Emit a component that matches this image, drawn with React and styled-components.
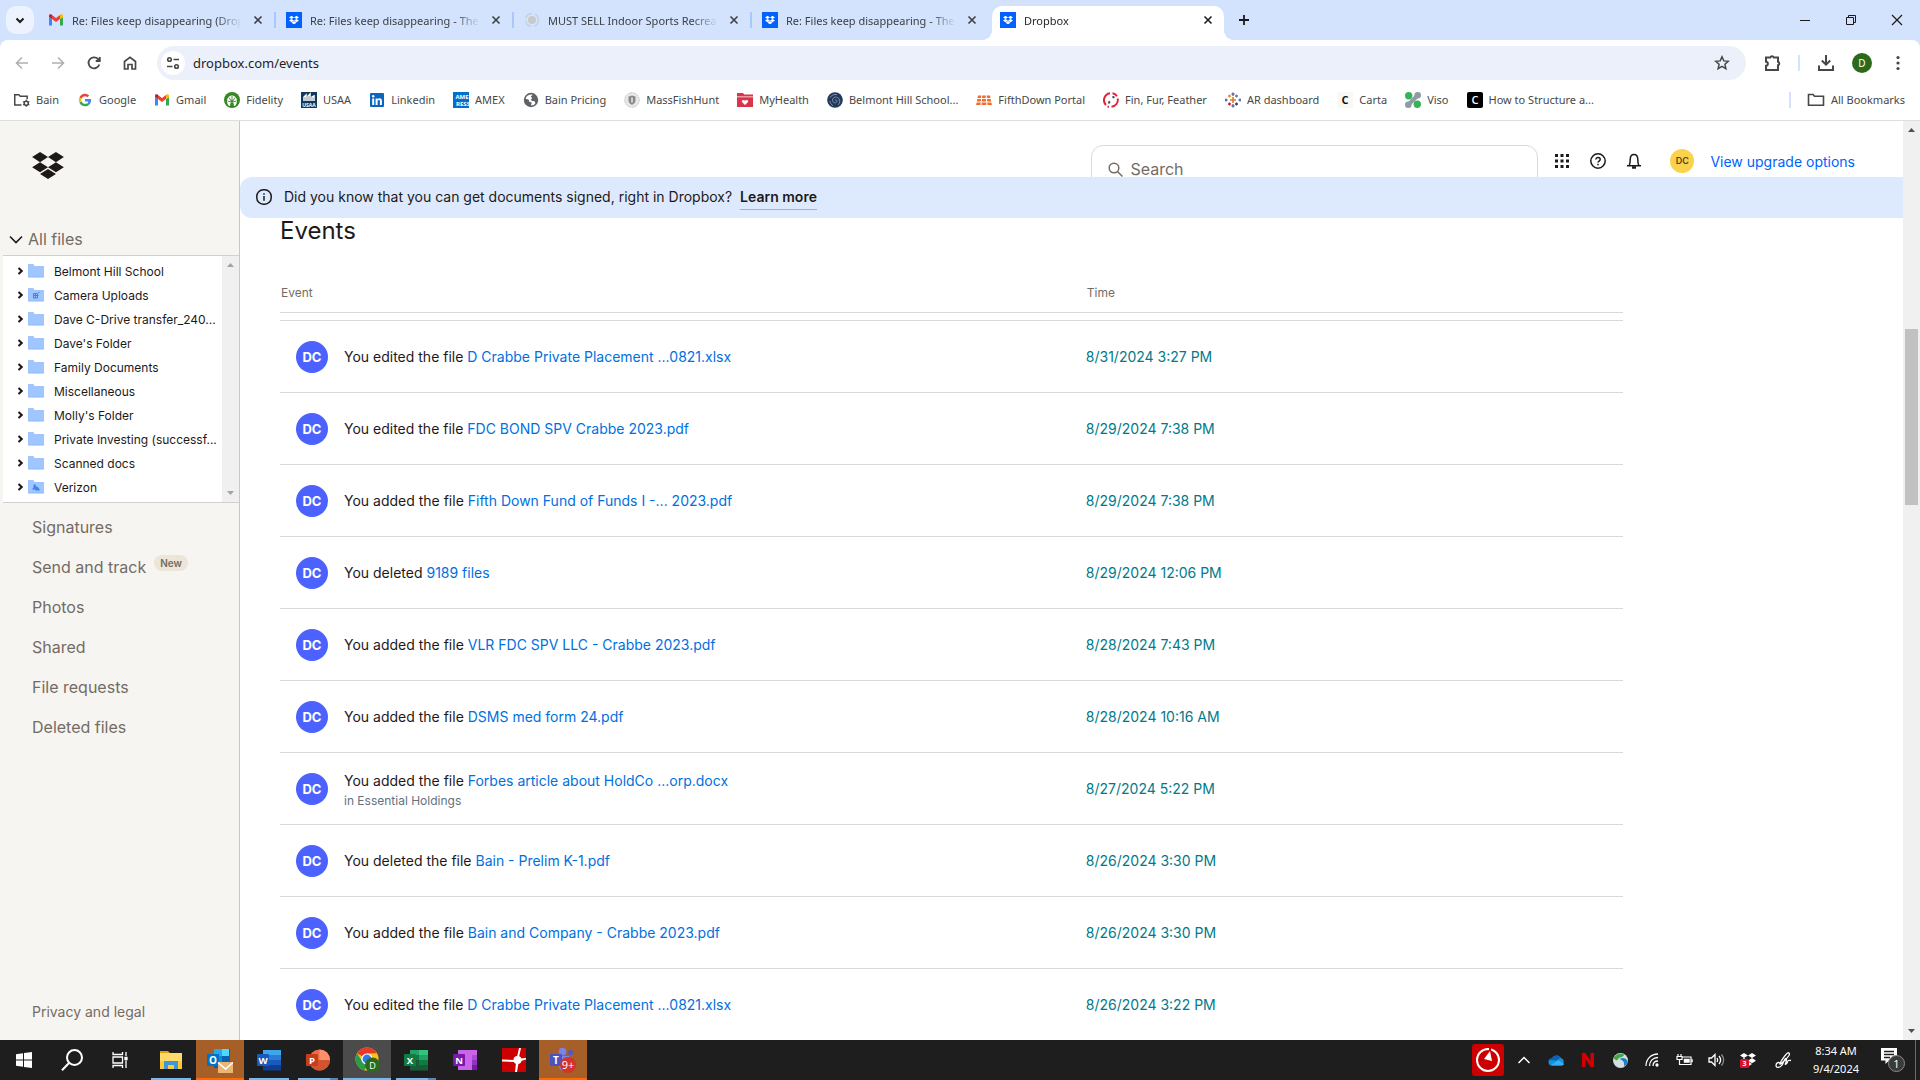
import React from "react";
import styled, { createGlobalStyle, css } from "styled-components";

/* ---------- theme ---------- */
const ui = '"Noto Sans", "Open Sans", sans-serif';
const body = 'Inter, "Liberation Sans", sans-serif';
const c = {
  ink: "#1e1919",
  muted: "#736c64",
  line: "#d9d9d9",
  sand: "#f7f5f2",
  link: "#0070e0",
  teal: "#007a8a",
  blue: "#0061fe",
  strip: "#d3e3fd",
  chrome: "#474747",
};

const Global = createGlobalStyle`
  *, *::before, *::after { box-sizing: border-box; }
  html, body { margin: 0; }
  body { font-family: ${body}; color: ${c.ink}; background: #fff; overflow: hidden; }
  button { font: inherit; color: inherit; background: none; border: 0; padding: 0; cursor: pointer; }
  a { color: inherit; text-decoration: none; }
  svg { display: block; flex: none; }
`;

/* ---------- shell ---------- */
const Screen = styled.div`
  display: flex;
  flex-direction: column;
  height: 100vh;
`;
const Center = css`
  display: flex;
  align-items: center;
  justify-content: center;
`;

/* ---------- browser tab strip ---------- */
const Strip = styled.header`
  display: flex;
  height: 40px;
  padding-left: 6px;
  background: ${c.strip};
  font-family: ${ui};
  font-size: 11px;
`;
const TabSearch = styled.button`
  ${Center}
  flex: none;
  width: 28px;
  height: 28px;
  margin: 6px 4px 0 0;
  border-radius: 10px;
  background: #ecf3fe;
`;
const Tabs = styled.nav`
  display: flex;
  align-items: flex-end;
  flex: 0 1 1190px;
  min-width: 0;
`;
const Tab = styled.div`
  display: flex;
  align-items: center;
  gap: 8px;
  flex: 0 1 238px;
  min-width: 0;
  height: 34px;
  padding: 0 0 6px 10px;
  color: #3c4043;
  ${(p) =>
    p.$active &&
    css`
      position: relative;
      flex-basis: 232px;
      margin: 0 4px 0 2px;
      padding: 0 8px 6px 8px;
      border-radius: 10px 10px 0 0;
      background: #fff;
      color: #1f1f1f;
      &::before,
      &::after {
        content: "";
        position: absolute;
        bottom: 0;
        width: 10px;
        height: 10px;
      }
      &::before {
        right: 100%;
        background: radial-gradient(circle at 0 0, transparent 10px, #fff 10px);
      }
      &::after {
        left: 100%;
        background: radial-gradient(circle at 100% 0, transparent 10px, #fff 10px);
      }
    `}
`;
const TabTitle = styled.span`
  flex: 1;
  min-width: 0;
  overflow: hidden;
  white-space: nowrap;
  padding-top: 2px;
  line-height: 16px;
  mask-image: linear-gradient(to right, #000 85%, transparent 100%);
`;
const TabClose = styled.button`
  ${Center}
  width: 16px;
  height: 16px;
`;
const TabRule = styled.span`
  width: 2px;
  height: 16px;
  background: ${(p) => (p.$hidden ? "transparent" : "#a8c7fa")};
`;
const NewTab = styled.button`
  ${Center}
  flex: none;
  width: 28px;
  height: 28px;
  margin: 6px 0 0 2px;
`;
const WindowControls = styled.div`
  display: flex;
  margin-left: auto;
`;
const WindowButton = styled.button`
  ${Center}
  width: 46px;
  height: 40px;
`;

/* ---------- toolbar ---------- */
const ToolbarBack = styled.div`
  background: ${c.strip};
`;
const Toolbar = styled.div`
  display: flex;
  align-items: center;
  height: 46px;
  padding: 0 4px;
  border-radius: 8px 8px 0 0;
  background: #fff;
  color: ${c.chrome};
`;
const ToolButton = styled.button`
  ${Center}
  width: 36px;
  height: 34px;
  color: ${(p) => (p.$dim ? "#b0b0b0" : "inherit")};
`;
const Omnibox = styled.div`
  display: flex;
  align-items: center;
  flex: 1;
  height: 34px;
  margin: 0 8px 0 9px;
  padding: 0 16px 0 4px;
  border-radius: 17px;
  background: #ecf0fa;
`;
const SiteInfo = styled.button`
  ${Center}
  width: 24px;
  height: 24px;
  border-radius: 50%;
  background: #fff;
`;
const Address = styled.input`
  flex: 1;
  min-width: 0;
  margin-left: 8px;
  padding: 0;
  border: 0;
  outline: 0;
  background: none;
  font: 13px/20px ${ui};
  color: #1f1f1f;
`;
const Divider = styled.span`
  width: 2px;
  height: 16px;
  margin: 0 ${(p) => p.$gap}px;
  background: ${c.strip};
`;
const Profile = styled.span`
  ${Center}
  width: 20px;
  height: 20px;
  border-radius: 50%;
  background: #2b6a1b;
  color: #fff;
  font: 10px/20px ${ui};
`;

/* ---------- bookmarks ---------- */
const Bookmarks = styled.nav`
  display: flex;
  align-items: center;
  gap: 18px;
  height: 35px;
  padding: 0 15px 6px 14px;
  border-bottom: 1px solid #dcdfe0;
  background: #fff;
  font-family: ${ui};
  font-size: 11px;
  line-height: 16px;
  color: ${c.chrome};
  white-space: nowrap;
`;
const Bookmark = styled.a`
  display: flex;
  align-items: center;
  gap: 6px;
`;
const AllBookmarks = styled.div`
  display: flex;
  align-items: center;
  gap: 16px;
  margin-left: auto;
`;

/* ---------- page ---------- */
const Page = styled.div`
  display: flex;
  flex: 1;
  min-height: 0;
`;
const Sidebar = styled.aside`
  display: flex;
  flex-direction: column;
  width: 240px;
  flex: none;
  border-right: 1px solid #c9c8c6;
  background: ${c.sand};
  color: ${c.muted};
`;
const LogoLink = styled.a`
  padding: 31px 32px 0;
`;
const AllFiles = styled.button`
  display: flex;
  align-items: center;
  gap: 5px;
  margin: 45px 0 1px;
  padding: 0 9px;
  height: 30px;
  font-size: 16px;
  line-height: 20px;
`;
const TreeBox = styled.div`
  display: flex;
  margin: 0 0 4px 3px;
  border: solid #d0d0d0;
  border-width: 1px 0;
  background: #fff;
`;
const Tree = styled.ul`
  flex: 1;
  min-width: 0;
  margin: 0;
  padding: 3px 0;
  list-style: none;
  color: ${c.ink};
`;
const Branch = styled.li`
  display: flex;
  align-items: center;
  height: 24px;
  padding-left: 14px;
  font-size: 12px;
`;
const BranchLabel = styled.a`
  margin-left: 10px;
  white-space: nowrap;
`;
const FolderGap = styled.button`
  ${Center}
  width: 6px;
  margin-right: 5px;
`;
const Track = styled.div`
  display: flex;
  flex-direction: column;
  justify-content: space-between;
  align-items: center;
  flex: none;
  width: 17px;
  background: #f0f0f0;
`;
const TrackArrow = styled.button`
  ${Center}
  width: 17px;
  height: 18px;
`;
const PageTrack = styled(Track)`
  justify-content: flex-start;
`;
const ThumbSpace = styled.div`
  display: flex;
  justify-content: center;
  flex: 1;
  width: 100%;
  padding: 190px 0 0;
`;
const Thumb = styled.div`
  width: 13px;
  height: 176px;
  background: #c1c1c1;
`;
const SideLink = styled.a`
  display: flex;
  align-items: center;
  gap: 8px;
  height: 40px;
  padding-left: 32px;
  font-size: 16px;
  line-height: 20px;
`;
const NewBadge = styled.span`
  height: 16px;
  margin-bottom: 8px;
  padding: 0 6px;
  border-radius: 8px;
  background: #ede5d8;
  font: 600 10px/16px ${body};
`;
const Legal = styled.a`
  margin-top: auto;
  padding: 0 0 18px 32px;
  font-size: 14px;
  line-height: 20px;
`;

const Main = styled.main`
  flex: 1;
  min-width: 0;
  overflow: hidden;
  background: #fff;
`;
const TopBar = styled.div`
  display: flex;
  justify-content: flex-end;
  align-items: flex-start;
  height: 56px;
  padding: 24px 48px 0 0;
  overflow: hidden;
`;
const Search = styled.label`
  display: flex;
  align-items: center;
  gap: 7px;
  width: 447px;
  height: 48px;
  margin-right: 6px;
  padding: 0 16px;
  border: 1px solid ${c.line};
  border-radius: 12px;
`;
const SearchInput = styled.input`
  flex: 1;
  min-width: 0;
  padding: 0;
  border: 0;
  outline: 0;
  background: none;
  font: 16px/20px ${body};
  &::placeholder {
    color: ${c.muted};
    opacity: 1;
  }
`;
const TopButton = styled.button`
  ${Center}
  width: 36px;
  height: 32px;
`;
const Account = styled.button`
  ${Center}
  width: 24px;
  height: 24px;
  margin: 4px 16px 0 18px;
  border-radius: 50%;
  background: #fad24b;
  color: #55431a;
  font: 600 9px/24px ${body};
`;
const Upgrade = styled.a`
  font-size: 14px;
  line-height: 34px;
  color: ${c.blue};
`;
const Banner = styled.div`
  display: flex;
  align-items: center;
  height: 41px;
  padding: 0 0 2px 16px;
  border-radius: 12px 0 0 12px;
  background: #ddeafe;
  font-size: 14px;
`;
const BannerText = styled.span`
  margin: 0 8px 0 12px;
`;
const LearnMore = styled.a`
  margin-top: 2px;
  border-bottom: 1px solid #b0b0b4;
  font-weight: 600;
  line-height: 24px;
`;
const Content = styled.section`
  padding: 0 280px 0 40px;
`;
const Title = styled.h1`
  margin: 0;
  font: 400 24px/26px ${body};
`;
const Table = styled.table`
  width: 100%;
  table-layout: fixed;
  border-spacing: 0;
  tbody::before {
    content: "";
    display: block;
    height: 7px;
  }
`;
const Head = styled.th`
  width: ${(p) => p.$width};
  padding: 39px 0 9px 1px;
  border-bottom: 1px solid ${c.line};
  text-align: left;
  font-weight: 400;
  font-size: 12px;
  line-height: 20px;
  color: ${c.muted};
`;
const Cell = styled.td`
  height: 72px;
  padding: 0;
  border-top: 1px solid ${c.line};
  font-size: 14px;
  line-height: 20px;
`;
const EventBox = styled.div`
  display: flex;
  align-items: center;
  gap: 16px;
  padding-left: 16px;
`;
const Avatar = styled.span`
  ${Center}
  width: 32px;
  height: 32px;
  border-radius: 50%;
  background: #4c62ff;
  color: #fff;
  font: 700 13px/32px ${body};
`;
const FileLink = styled.a`
  color: ${c.link};
`;
const Details = styled.div`
  padding-top: ${(p) => (p.$stacked ? 4 : 0)}px;
`;
const Place = styled.div`
  font-size: 12px;
  line-height: 20px;
  color: #637282;
`;
const Time = styled.time`
  color: ${c.teal};
`;

/* ---------- taskbar ---------- */
const Taskbar = styled.footer`
  display: flex;
  height: 40px;
  flex: none;
  background: #1e1e1e;
  color: #fff;
  font-family: ${ui};
`;
const SystemButton = styled.button`
  ${Center}
  width: 48px;
`;
const Apps = styled.div`
  display: flex;
  gap: 1px;
  padding-left: 3px;
`;
const AppButton = styled.button`
  ${Center}
  width: 48px;
  background: ${(p) => (p.$alert ? "#a65f28" : p.$active ? "#4b4b4b" : "none")};
  background-image: ${(p) => {
    if (p.$alert) return "linear-gradient(#ff6a00, #ff6a00)";
    if (p.$stack) return "linear-gradient(to right, #76b9ed 80%, #5688b0 80%)";
    return p.$open ? "linear-gradient(#76b9ed, #76b9ed)" : "none";
  }};
  background-size: ${(p) => (p.$alert || p.$active ? "48px" : "40px")} 2px;
  background-repeat: no-repeat;
  background-position: bottom center;
`;
const Tray = styled.div`
  display: flex;
  margin-left: auto;
`;
const TrayButton = styled.button`
  ${Center}
  width: ${(p) => p.$width || 32}px;
`;
const Clock = styled.time`
  display: flex;
  flex-direction: column;
  justify-content: center;
  width: 68px;
  font-size: 11px;
  line-height: 18px;
  text-align: center;
`;
const Notices = styled.button`
  ${Center}
  width: 46px;
  border-right: 1px solid #6a6a6a;
  margin-right: 4px;
`;

/* ---------- icons ---------- */
const Svg = ({ s = 16, w = s, h = s, vb, children, ...r }) => (
  <svg width={w} height={h} viewBox={vb || `0 0 ${w} ${h}`} fill="none" aria-hidden="true" {...r}>
    {children}
  </svg>
);
const Line = ({ children, sw = 1.8, ...r }) => (
  <Svg stroke="currentColor" strokeWidth={sw} {...r}>{children}</Svg>
);
const Glyph = ({ x = 8, y = 12, size = 10, fill = "#fff", weight = 700, children }) => (
  <text x={x} y={y} fontSize={size} fill={fill} fontWeight={weight} textAnchor="middle" fontFamily="Open Sans, sans-serif">
    {children}
  </text>
);

const boxes = "M8 0l8 5.1-8 5.1-8-5.1zM24 0l8 5.1-8 5.1-8-5.1zM0 15.3l8-5.1 8 5.1-8 5.1zM24 10.2l8 5.1-8 5.1-8-5.1zM8 22.1l8-5.1 8 5.1-8 5.1z";
const DropboxMark = ({ w = 32, h = 27, fill = c.ink }) => (
  <Svg w={w} h={h} vb="0 0 32 27.2"><path fill={fill} d={boxes} /></Svg>
);
const DropboxTile = () => (
  <Svg>
    <path fill="#0061fe" d="M0 0h16v16H0z" />
    <path fill="#fff" transform="translate(3 3.8) scale(.3125)" d={boxes} />
  </Svg>
);
const Gmail = () => (
  <Svg>
    <path fill="#4285f4" d="M1 13.5h3V7L1 5z" />
    <path fill="#34a853" d="M12 13.5h3V5l-3 2z" />
    <path fill="#ea4335" d="M4 7V3l4 3 4-3v4l-4 3z" />
    <path fill="#c5221f" d="M1 5V3.6C1 2.2 2.6 1.8 3.6 2.6L4 3v4z" />
    <path fill="#fbbc04" d="M15 5V3.6C15 2.2 13.4 1.8 12.4 2.6L12 3v4z" />
  </Svg>
);
const Loading = () => (
  <Svg>
    <circle cx="8" cy="8" r="6.5" stroke="#c4d0e4" strokeWidth="1.5" strokeDasharray="8 3" />
    <circle cx="8" cy="8" r="4" fill="#c9c9c9" />
  </Svg>
);
const Close = () => <Line s={10} sw={1.6}><path d="M1.5 1.5l7 7M8.5 1.5l-7 7" /></Line>;
const Google = () => (
  <Svg>
    <path fill="#4285f4" d="M14 8.2c0-.5 0-.9-.1-1.3H8v2.5h3.4c-.2.8-.6 1.4-1.2 1.8l2 1.6c1.2-1.1 1.8-2.7 1.8-4.6z" />
    <path fill="#34a853" d="M8 14.3c1.7 0 3.1-.5 4.2-1.5l-2-1.6c-.6.4-1.3.6-2.2.6-1.6 0-3-1.1-3.5-2.6l-2.1 1.6C3.4 12.9 5.5 14.3 8 14.3z" />
    <path fill="#fbbc04" d="M4.5 9.2a3.7 3.7 0 010-2.4L2.4 5.2a6.2 6.2 0 000 5.6z" />
    <path fill="#ea4335" d="M8 4.2c.9 0 1.8.3 2.4 1l1.8-1.8A6.2 6.2 0 002.4 5.2l2.1 1.6C5 5.3 6.4 4.2 8 4.2z" />
  </Svg>
);
const BainFolder = () => (
  <Svg w={16} h={16} vb="1 0 17 16" stroke={c.chrome} strokeWidth="1.6">
    <path d="M9 13.2H1.8V2.3h4.3l1.5 1.8H15v3" />
    <circle cx="14" cy="11.5" r="2.2" />
    <path d="M14 7.7v1.5M14 13.8v1.5M10.7 9.6l1.3.8M16 12.6l1.3.8M10.7 13.4l1.3-.8M16 10.4l1.3-.8" strokeWidth="1.3" />
  </Svg>
);
const Fidelity = () => (
  <Svg>
    <circle cx="8" cy="8" r="8" fill="#368727" />
    <path fill="#fff" d="M4.5 13.5C1.5 9 3.5 3.5 8 3.5s6.5 5.5 3.5 10L10 14l-.5-3h-3L6 14z" />
    <path stroke="#368727" strokeWidth=".9" d="M8 4v5M5 5.5l2.3 3.7M11 5.500L8.700 9.200M3.700 9l3.300 1M12.300 9L9 10" />
    <circle cx="8" cy="9.6" r="1.3" fill="#368727" />
  </Svg>
);
const Usaa = () => (
  <Svg>
    <path fill="#12395b" d="M0 0h16v16H0z" />
    <path stroke="#fff" strokeWidth="1.5" d="M3 9V5l2-2v6M7 9V4l2-2v7M11 9V5l2-1v5" />
    <Glyph y={15} size={5}>USAA</Glyph>
  </Svg>
);
const Linkedin = () => (
  <Svg>
    <rect x="1" y="1" width="14" height="14" rx="1" fill="#0a66c2" />
    <path fill="#fff" d="M3.2 6.4h2V13h-2zM6.6 6.4h1.9v.9c.4-.7 1.1-1.1 2-1.1 1.8 0 2.4 1.1 2.4 3V13h-2V9.6c0-1-.2-1.7-1.1-1.7-.8 0-1.2.6-1.2 1.7V13h-2z" />
    <circle cx="4.2" cy="4.3" r="1.2" fill="#fff" />
  </Svg>
);
const Amex = () => (
  <Svg>
    <path fill="#016fd0" d="M0 0h16v16H0z" />
    <Glyph x={9} y={7} size={6}>AME</Glyph>
    <Glyph x={10} y={14} size={6}>RESS</Glyph>
  </Svg>
);
const Globe = () => (
  <Svg>
    <circle cx="8" cy="8" r="7.2" fill="#5f6368" />
    <path fill="#fff" d="M9.5 2.6C6.5 2 3.5 3.6 2.6 6.5c1.2 1 2.3.5 3.1 1.3.7.8-.2 1.6.9 2.2 1 .5 2 0 2 1.200 0 .8-.7 1.300-.5 2.300 1.800 0 3.300-.8 4.300-2.200-.6-1.200-.4-1.900-1.600-2.300-1.200-.3-2.300.3-2.700-.9-.3-1 .9-1.300 1-2 .1-.8-1.300-.5-1.200-1.500.1-.9 1.500-.7 1.600-2z" />
  </Svg>
);
const Shield = () => (
  <Svg>
    <circle cx="8" cy="8" r="7.3" fill="#e8e8e8" stroke="#bcbcbc" strokeDasharray="1.5 1" />
    <path fill="#8a8a8a" d="M4.5 4.5L8 3.5l3.5 1V9c0 2-2 3-3.5 3.8C6.5 12 4.5 11 4.5 9z" />
    <path fill="#fff" d="M7.4 5.5h1.2v5H7.4z" />
  </Svg>
);
const Health = () => (
  <Svg>
    <path fill="#d9344a" d="M0 1h6l1.2 1.5H16v2H0zM0 5.2h16V15H0z" />
    <path fill="#fff" d="M8 13L5 10c-.9-1.7 1.6-3 3-1.2 1.4-1.8 3.9-.5 3 1.2z" />
  </Svg>
);
const Belmont = () => (
  <Svg>
    <circle cx="8" cy="8" r="7.8" fill="#22395a" />
    <path stroke="#7f93b2" d="M8 8.5c.8-1.3 2.6-.2 1.9 1.2-.9 1.8-3.9 1.3-4.3-.8C5 6 8 4.3 10.5 5.5c3 1.5 2.8 5.5.5 7.5M3 5.5C4.5 3 7.5 2 10 2.7M3 9c.2 2 1.2 3.7 3 4.7" />
  </Svg>
);
const FifthDown = () => (
  <Svg>
    <path fill="#f26b2c" d="M2 3.5h3.3L5 6H1.5zM6.3 3.5h3.4V6H6zM10.7 3.5H14l.5 2.5H11zM1.3 7H5l-.2 2.5H.8zM6 7h4v2.5H5.8zM11 7h3.700l.5 2.500h-4zM.7 10.500h4L4.500 13H0zM5.700 10.500h4.600V13H5.500zM11.300 10.500h4L16 13h-4.500z" />
  </Svg>
);
const Feather = () => (
  <Svg>
    <path stroke="#e0263c" strokeWidth="2" d="M7 1.2A7 7 0 003 13M4.5 14.3c.6.3 1 .5 1.5.5M9.5 1.2c2 .3 3.5 1.5 4.5 3M14.8 6.5c.5 4-2 7.5-6.3 8.300" />
    <path fill="#3b3b4f" d="M9 4.500l2.200-.5.500 1.800-1.700.7zM5 9.500l2-.5.3 2L5.500 12z" />
  </Svg>
);
const Tableau = () => (
  <Svg strokeWidth="1.3">
    <path stroke="#e8762d" strokeWidth="1.6" d="M8 5v6M5 8h6" />
    <path stroke="#5b6591" d="M8 .5V4M6.500 2h3M8 12v3.500M6.500 14h3M1 6.500v3M0 8h2.500M15 6.500v3M13.500 8H16" />
    <path stroke="#59879b" d="M11.500 2.500v3M10 4h3" />
    <path stroke="#eb912c" d="M4.500 2.500v3M3 4h3" />
    <path stroke="#c72035" d="M4.500 10.500v3M3 12h3" />
    <path stroke="#1f447e" d="M11.500 10.500v3M10 12h3" />
  </Svg>
);
const Carta = () => <Svg><path fill="#faf8f2" d="M0 0h16v16H0z" /><Glyph fill="#111" size={11}>C</Glyph></Svg>;
const Viso = () => (
  <Svg>
    <path stroke="#8c9ba5" strokeWidth="4" strokeLinecap="round" d="M3.500 12.500l9-9" />
    <circle cx="12.700" cy="3.300" r="3.300" fill="#8c9ba5" />
    <circle cx="3.300" cy="12.700" r="3.300" fill="#8c9ba5" />
    <circle cx="3.700" cy="3.700" r="3.700" fill="#37b25a" />
    <circle cx="12.300" cy="12.300" r="3.700" fill="#37b25a" />
  </Svg>
);
const HowTo = () => <Svg><rect width="16" height="16" rx="2" fill="#000" /><Glyph weight={600} size={11}>C</Glyph></Svg>;

const FolderIcon = ({ mark }) => (
  <Svg w={16} h={14}>
    <path fill="#8ab8ff" d="M0 1.500C0 .7.500.3 1.200.3h3.600c.6 0 .9.300 1.100.8l.3.900h8.600c.8 0 1.200.4 1.200 1.200v9.300c0 .7-.4 1.100-1.200 1.100H1.200C.4 13.600 0 13.200 0 12.500z" />
    <path fill="#a0c5ff" d="M0 1.500C0 .7.500.3 1.200.3h3.600c.6 0 .9.300 1.100.8l.3.900h8.600c.8 0 1.200.4 1.200 1.200V12.600H0z" />
    {mark === "camera" && (
      <>
        <path stroke="#3d84f2" d="M5.500 5.500h4v4.500h-4zM5 7.500h5.500M7.500 5v5" />
        <path fill="#3d84f2" d="M10.500 4h1v1h-1z" />
      </>
    )}
    {mark === "team" && <path fill="#3d84f2" d="M4 9.500L5.500 7.500 5.300 5.500 7 4l1.200 2L8 7l1.200-.5L10.800 8l1.200 2.500H7.500L7 9.500z" />}
  </Svg>
);

/* ---------- data ---------- */
const tabs = [
  [Gmail, "Re: Files keep disappearing (Dropbox)"],
  [DropboxTile, "Re: Files keep disappearing - The Dropbox"],
  [Loading, "MUST SELL Indoor Sports Recreation"],
  [DropboxTile, "Re: Files keep disappearing - The Dropbox"],
  [DropboxTile, "Dropbox"],
];
const bookmarks = [
  [BainFolder, "Bain"], [Google, "Google"], [Gmail, "Gmail"], [Fidelity, "Fidelity"], [Usaa, "USAA"],
  [Linkedin, "Linkedin"], [Amex, "AMEX"], [Globe, "Bain Pricing"], [Shield, "MassFishHunt"], [Health, "MyHealth"],
  [Belmont, "Belmont Hill School..."], [FifthDown, "FifthDown Portal"], [Feather, "Fin, Fur, Feather"],
  [Tableau, "AR dashboard"], [Carta, "Carta"], [Viso, "Viso"], [HowTo, "How to Structure a..."],
];
const folders = [
  ["Belmont Hill School"], ["Camera Uploads", "camera"], ["Dave C-Drive transfer_240..."], ["Dave's Folder"],
  ["Family Documents"], ["Miscellaneous"], ["Molly's Folder"], ["Private Investing (successf..."], ["Scanned docs"],
  ["Verizon", "team"],
];
const links = ["Signatures", "Send and track", "Photos", "Shared", "File requests", "Deleted files"];
const events = [
  ["You edited the file", "D Crabbe Private Placement ...0821.xlsx", "8/31/2024 3:27 PM"],
  ["You edited the file", "FDC BOND SPV Crabbe 2023.pdf", "8/29/2024 7:38 PM"],
  ["You added the file", "Fifth Down Fund of Funds I -... 2023.pdf", "8/29/2024 7:38 PM"],
  ["You deleted", "9189 files", "8/29/2024 12:06 PM"],
  ["You added the file", "VLR FDC SPV LLC - Crabbe 2023.pdf", "8/28/2024 7:43 PM"],
  ["You added the file", "DSMS med form 24.pdf", "8/28/2024 10:16 AM"],
  ["You added the file", "Forbes article about HoldCo ...orp.docx", "8/27/2024 5:22 PM", "in Essential Holdings"],
  ["You deleted the file", "Bain - Prelim K-1.pdf", "8/26/2024 3:30 PM"],
  ["You added the file", "Bain and Company - Crabbe 2023.pdf", "8/26/2024 3:30 PM"],
  ["You edited the file", "D Crabbe Private Placement ...0821.xlsx", "8/26/2024 3:22 PM"],
];

/* ---------- taskbar icons ---------- */
const Tile = ({ fill, letter }) => (
  <>
    <rect x="0" y="6" width="12" height="12" rx="1" fill={fill} />
    <Glyph x={6} y={15.5} size={9.5}>{letter}</Glyph>
  </>
);
const Explorer = () => (
  <Svg s={24}>
    <path fill="#e5a00d" d="M1 3h8l2 2H1z" />
    <path fill="#ffd96a" d="M1 5h22v16H1z" />
    <path fill="#ffca3a" d="M1 13h22v8H1z" />
    <path fill="#3f97d8" d="M5 13h14v8h-4v-4H9v4H5z" />
  </Svg>
);
const Outlook = () => (
  <Svg w={26} h={26}>
    <path fill="#0f5fb0" d="M7 2h16v19H7z" />
    <path fill="#28a8ea" d="M7 2h8v7H7z" />
    <path fill="#50d9ff" d="M15 2h7v7h-7z" />
    <path fill="#0a8bdc" d="M7 9h8v6H7z" />
    <path fill="#0072c6" d="M0 7h12v12H0z" />
    <Glyph x={6} y={17} size={10}>O</Glyph>
    <path fill="#e9b675" d="M11 15h15v11H11z" />
    <path stroke="#fff" strokeWidth="1.4" d="M11 15.500l7.500 6.500 7.500-6.500" />
  </Svg>
);
const Word = () => (
  <Svg s={24}>
    <path fill="#41a5ee" d="M6 2h18v5.500H6z" /><path fill="#2b7cd3" d="M6 7h18v5.500H6z" />
    <path fill="#185abd" d="M6 12h18v5.500H6z" /><path fill="#103f91" d="M6 17h18v5.500H6z" />
    <Tile fill="#185abd" letter="W" />
  </Svg>
);
const PowerPoint = () => (
  <Svg s={24}>
    <circle cx="13.500" cy="12" r="10.500" fill="#ed6c47" />
    <path fill="#ff8f6b" d="M13.500 1.500A10.500 10.500 0 0124 12H13.500z" />
    <path fill="#d35230" d="M3 12h21a10.500 10.500 0 01-21 0z" />
    <Tile fill="#c43e1c" letter="P" />
  </Svg>
);
const Chrome = () => (
  <Svg w={26} h={26}>
    <circle cx="13" cy="12" r="11.500" fill="#fbc116" />
    <path fill="#e33b2e" d="M13 12L3 6.300A11.500 11.500 0 0123 6.300L13 6.500z" />
    <path fill="#2c9c4b" d="M3 6.300l5.500 8.500L13 18l-2.500 5.300A11.500 11.500 0 013 6.300z" />
    <circle cx="13" cy="12" r="5.600" fill="#fff" />
    <circle cx="13" cy="12" r="4.400" fill="#3578e5" />
    <circle cx="18.500" cy="18" r="7.500" fill="#2b6a1b" />
    <Glyph x={18.5} y={21.5} size={9} weight={400}>D</Glyph>
  </Svg>
);
const Excel = () => (
  <Svg s={24}>
    <path fill="#21a366" d="M6 2h9v5.500H6z" /><path fill="#33c481" d="M15 2h9v5.500h-9z" />
    <path fill="#107c41" d="M6 7h9v5.500H6z" /><path fill="#21a366" d="M15 7h9v5.500h-9z" />
    <path fill="#185c37" d="M6 12h18v10.500H6z" /><path fill="#107c41" d="M15 12h9v5h-9z" />
    <Tile fill="#107c41" letter="X" />
  </Svg>
);
const OneNote = () => (
  <Svg s={24}>
    <path fill="#ca64ea" d="M5 2h19v20H5z" /><path fill="#ae4bd5" d="M19 7h5v5h-5z" />
    <path fill="#9332bf" d="M19 12h5v5h-5z" /><path fill="#7719aa" d="M19 17h5v5h-5z" />
    <Tile fill="#7719aa" letter="N" />
  </Svg>
);
const BainApp = () => (
  <Svg s={24}>
    <path fill="#c00" d="M0 0h24v24H0z" />
    <circle cx="15.500" cy="12" r="4" fill="#fff" />
    <path fill="#fff" d="M0 11.500l12 .5v2L0 13.500zM18 10.500l6-.5v1.500l-5 1.500zM15 9l2-9h2l-2 9zM14 15l-1 9h2l1.500-9z" />
  </Svg>
);
const Teams = () => (
  <Svg w={26} h={26}>
    <circle cx="12.500" cy="4.500" r="3.800" fill="#7b83eb" /><circle cx="20.500" cy="5.500" r="2.600" fill="#5059c9" />
    <path fill="#7b83eb" d="M7 9h12v9a5 5 0 01-10 2z" />
    <path fill="#4b53bc" d="M0 7h12v12H0z" />
    <Glyph x={6} y={17} size={10}>T</Glyph>
    <circle cx="18" cy="18" r="8" fill="#d0342c" />
    <Glyph x={18} y={22} size={11} weight={400}>9+</Glyph>
  </Svg>
);
const apps = [
  [Explorer, "File Explorer", { $open: true }],
  [Outlook, "Outlook", { $alert: true }],
  [Word, "Word", { $open: true }],
  [PowerPoint, "PowerPoint", { $stack: true }],
  [Chrome, "Google Chrome", { $open: true, $active: true }],
  [Excel, "Excel", { $stack: true }],
  [OneNote, "OneNote", {}],
  [BainApp, "Bain", {}],
  [Teams, "Teams", { $alert: true }],
];
const tray = [
  ["Show hidden icons", <Line w={14} h={8} sw={1.5}><path d="M1.5 7L7 1.500 12.500 7" /></Line>],
  ["OneDrive", <Svg w={17} h={11}><path fill="#1490df" d="M4 10.500a3.500 3.500 0 010-7 5 5 0 019-.5 4 4 0 01.5 7.500z" /><path fill="#0f5fb5" d="M1 5a3.500 3.500 0 013-2 5 5 0 018.500-.5L9 5.500z" /><path fill="#35b1f3" d="M3 10.500L10 5l6 4c-.5 1-1.500 1.500-2.500 1.500z" /></Svg>],
  ["Netflix", <Svg w={12} h={14}><path fill="#d40000" d="M0 0h3.500l5 8V0H12v14H8.500l-5-8v8H0z" /></Svg>],
  ["Network client", <Svg s={15}><circle cx="7.500" cy="7.500" r="7.500" fill="#d5dee4" /><path fill="#41a845" d="M.5 5.500C2.500 1 7 0 10.500 1.200 12 2 10 4 7 4.500 5 5 5 7.500 3.500 7.500z" /><path fill="#1d7fbf" d="M6.500 6c4-2 6.500-.5 8.200 2-.2 2.500-1.700 4.500-3.700 5.500.7-4-.5-6-4.500-7.500z" /></Svg>],
  ["Wi-Fi", <Line w={14} h={14} sw={1.3}><path d="M1 13C1 6 6 1 13 1M4.500 13C4.500 8 8 4.500 13 4.500M8 13c0-3 2-5 5-5" /><circle cx="12" cy="12" r="1" fill="#fff" /></Line>],
  ["Power", <Line w={17} h={14} sw={1.2}><path d="M6.500 4H15v7.500H6.500M1 3.500h5v3H1zM2 3.500V1M5 3.500V1M3.500 7v4.500h3" /><path fill="#fff" d="M8 6h5.500v3.500H8zM15.500 6.500h1v2.500h-1z" strokeWidth=".5" /></Line>],
  ["Volume", <Line w={17} h={14} sw={1.3}><path d="M1 5h2.500L7 1.500v11L3.500 9H1zM9 5c.8 1.300.8 2.700 0 4M11 3c2 2.500 2 5.500 0 8" /><path stroke="#8a8a8a" d="M13.500 1.500c2.700 3.500 2.700 7.500 0 11" /></Line>],
  ["Dropbox", <Svg w={16} h={16}><g transform="translate(0 1) scale(.5)"><path fill="#fff" d={boxes} /></g><rect y="7" width="9" height="9" rx="1.500" fill="#d7112b" /><Glyph x={4.5} y={14} size={7}>3</Glyph></Svg>],
];

const Arrow = ({ down, fill }) => (
  <Svg w={7} h={4}><path fill={fill} d={down ? "M0 0h7L3.500 4z" : "M0 4h7L3.500 0z"} /></Svg>
);

/* ---------- app ---------- */
export default function App() {
  return (
    <Screen>
      <Global />
      <Strip>
        <TabSearch aria-label="Search tabs"><Line s={10} sw={2}><path d="M1.500 3.500L5 7l3.500-3.500" /></Line></TabSearch>
        <Tabs>
          {tabs.map(([Icon, title], i) => (
            <Tab key={i} $active={i === 4}>
              <Icon />
              <TabTitle>{title}</TabTitle>
              <TabClose aria-label="Close tab"><Close /></TabClose>
              {i < 4 && <TabRule $hidden={i === 3} />}
            </Tab>
          ))}
        </Tabs>
        <NewTab aria-label="New tab"><Line s={12} sw={1.8}><path d="M6 1v10M1 6h10" /></Line></NewTab>
        <WindowControls>
          <WindowButton aria-label="Minimize"><Line s={10} sw={1}><path d="M0 5.500h10" /></Line></WindowButton>
          <WindowButton aria-label="Restore"><Line s={10} sw={1}><path d="M.5 2.500h7v7h-7zM2.500 2.500v-2h7v7h-2" /></Line></WindowButton>
          <WindowButton aria-label="Close"><Line s={12} sw={1.2}><path d="M1 1l10 10M11 1L1 11" /></Line></WindowButton>
        </WindowControls>
      </Strip>

      <ToolbarBack>
        <Toolbar>
          <ToolButton $dim aria-label="Back"><Line s={14} sw={1.6}><path d="M13 7H1.500M7 1.500L1.500 7 7 12.500" /></Line></ToolButton>
          <ToolButton $dim aria-label="Forward"><Line s={14} sw={1.6}><path d="M1 7h11.500M7 1.500L12.500 7 7 12.500" /></Line></ToolButton>
          <ToolButton aria-label="Reload"><Line s={14}><path d="M12.300 8.500A5.500 5.500 0 1111 3l1.500 1.600M12.800 1v4H8.700" /></Line></ToolButton>
          <ToolButton aria-label="Home"><Line s={14} sw={1.7}><path d="M1.500 13V5.500L7 1.300l5.500 4.200V13H9V8.500H5V13z" /></Line></ToolButton>
          <Omnibox>
            <SiteInfo aria-label="Site information">
              <Line s={14} sw={1.6}><circle cx="3.500" cy="3.500" r="1.800" /><path d="M7.500 3.500H13M1 10.500h5.500" /><circle cx="10.500" cy="10.500" r="1.800" /></Line>
            </SiteInfo>
            <Address aria-label="Address" defaultValue="dropbox.com/events" />
            <Line s={16} sw={1.5}><path d="M8 1.800l1.800 4.100 4.500.4-3.400 3 1 4.400L8 11.400l-3.900 2.300 1-4.400-3.400-3 4.500-.4z" /></Line>
          </Omnibox>
          <ToolButton aria-label="Extensions"><Line w={18} h={18} sw={2}><path d="M3 3.500h4.200a1.900 1.900 0 013.600 0H15v4.200a1.900 1.900 0 010 3.600V16H3v-4.200c2.500-.3 2.500-3.800 0-4.100z" /></Line></ToolButton>
          <Divider $gap={8} />
          <ToolButton aria-label="Downloads"><Line s={16} sw={2}><path d="M8 0v9.500M3.800 5.500L8 9.700l4.200-4.200M1 10.500V15h14v-4.500" /></Line></ToolButton>
          <ToolButton aria-label="Profile"><Profile>D</Profile></ToolButton>
          <ToolButton aria-label="Menu"><Svg w={4} h={16}><g fill={c.chrome}><circle cx="2" cy="2.500" r="1.600" /><circle cx="2" cy="8" r="1.600" /><circle cx="2" cy="13.500" r="1.600" /></g></Svg></ToolButton>
        </Toolbar>
      </ToolbarBack>

      <Bookmarks>
        {bookmarks.map(([Icon, label]) => (
          <Bookmark href="#" key={label}><Icon />{label}</Bookmark>
        ))}
        <AllBookmarks>
          <Divider $gap={0} />
          <Bookmark href="#">
            <Line s={18} sw={1.6}><path d="M1.500 14.300V3.500H6l1.500 1.700h9v9.100z" /></Line>
            All Bookmarks
          </Bookmark>
        </AllBookmarks>
      </Bookmarks>

      <Page>
        <Sidebar>
          <LogoLink href="#" aria-label="Dropbox home"><DropboxMark /></LogoLink>
          <AllFiles><Line w={14} h={9} sw={1.6} color={c.ink}><path d="M1 1.500l6 6 6-6" /></Line>All files</AllFiles>
          <TreeBox>
            <Tree>
              {folders.map(([name, mark]) => (
                <Branch key={name}>
                  <FolderGap aria-label={`Expand ${name}`}><Line w={6} h={8} sw={2}><path d="M1.500 1l3.200 3-3.200 3" /></Line></FolderGap>
                  <FolderIcon mark={mark} />
                  <BranchLabel href="#">{name}</BranchLabel>
                </Branch>
              ))}
            </Tree>
            <Track>
              <TrackArrow aria-label="Scroll up"><Arrow fill="#a3a3a3" /></TrackArrow>
              <TrackArrow aria-label="Scroll down"><Arrow down fill="#a3a3a3" /></TrackArrow>
            </Track>
          </TreeBox>
          {links.map((l) => (
            <SideLink href="#" key={l}>{l}{l === "Send and track" && <NewBadge>New</NewBadge>}</SideLink>
          ))}
          <Legal href="#">Privacy and legal</Legal>
        </Sidebar>

        <Main>
          <TopBar>
            <Search>
              <Line s={15} sw={1.5} color={c.muted}><circle cx="6" cy="6" r="4.800" /><path d="M9.500 9.500l5 5" /></Line>
              <SearchInput type="text" aria-label="Search" placeholder="Search" />
            </Search>
            <TopButton aria-label="Apps">
              <Svg s={14}><g fill={c.ink}>{[0, 5.5, 11].map((y) => [0, 5.5, 11].map((x) => <rect key={x + "-" + y} x={x} y={y} width="3" height="3" />))}</g></Svg>
            </TopButton>
            <TopButton aria-label="Help">
              <Line s={16} sw={1.5}><circle cx="8" cy="8" r="7.200" /><path d="M5.900 6.600c0-2.800 4.300-2.700 4.300 0 0 1.500-2.200 1.500-2.200 3M8 10.800v1.500" /></Line>
            </TopButton>
            <TopButton aria-label="Notifications">
              <Line s={16} sw={1.5}><path d="M1 12.800h14M3.200 12.500c1-1.500 1-3 1-6C4.200 3.500 5.500 1.500 8 1.500s3.800 2 3.800 5c0 3 0 4.500 1 6" /><path fill="currentColor" d="M6.800 14h2.400v1H6.800z" /></Line>
            </TopButton>
            <Account aria-label="Account">DC</Account>
            <Upgrade href="#">View upgrade options</Upgrade>
          </TopBar>
          <Banner>
            <Line s={16} sw={1.5}><rect x=".8" y=".8" width="14.400" height="14.400" rx="6.500" /><path d="M8 7v4.800M8 4.200v1.600" /></Line>
            <BannerText>Did you know that you can get documents signed, right in Dropbox?</BannerText>
            <LearnMore href="#">Learn more</LearnMore>
          </Banner>
          <Content>
            <Title>Events</Title>
            <Table>
              <thead><tr><Head $width="60%">Event</Head><Head $width="40%">Time</Head></tr></thead>
              <tbody>
                {events.map(([verb, file, time, place], i) => (
                  <tr key={i}>
                    <Cell>
                      <EventBox>
                        <Avatar>DC</Avatar>
                        <Details $stacked={!!place}>
                          {verb} <FileLink href="#">{file}</FileLink>
                          {place && <Place>{place}</Place>}
                        </Details>
                      </EventBox>
                    </Cell>
                    <Cell><Time>{time}</Time></Cell>
                  </tr>
                ))}
              </tbody>
            </Table>
          </Content>
        </Main>

        <PageTrack>
          <TrackArrow aria-label="Scroll page up"><Arrow fill="#505050" /></TrackArrow>
          <ThumbSpace><Thumb /></ThumbSpace>
          <TrackArrow aria-label="Scroll page down"><Arrow down fill="#505050" /></TrackArrow>
        </PageTrack>
      </Page>

      <Taskbar>
        <SystemButton aria-label="Start"><Svg><path fill="#fff" d="M0 2.200l7-1v6.300H0zM8 1l8-1v7.500H8zM0 8.500h7v6.300l-7-1zM8 8.500h8V16l-8-1z" /></Svg></SystemButton>
        <SystemButton aria-label="Search"><Line s={22} sw={2}><circle cx="13.500" cy="8.500" r="7.500" /><path d="M8 14l-7 7.300" /></Line></SystemButton>
        <SystemButton aria-label="Task view"><Line s={16} sw={1.3}><path d="M1 0v2.500h9.500V0M1 5h9.500v6H1zM1 16v-2.500h9.500V16M14 0v4M14 8.500V16" /><path fill="#fff" d="M13 5.500h2v2h-2z" /></Line></SystemButton>
        <Apps>
          {apps.map(([Icon, name, state]) => (
            <AppButton key={name} aria-label={name} {...state}><Icon /></AppButton>
          ))}
        </Apps>
        <Tray>
          <TrayButton $width={40} aria-label="Security">
            <Svg s={32}>
              <rect width="32" height="32" rx="3" fill="#c00" />
              <circle cx="16" cy="16" r="11" stroke="#fff" strokeWidth="2" />
              <path fill="#fff" d="M18 7l2 10-8-2z" />
              <path fill="#c00" d="M17 3h2v4h-2z" />
            </Svg>
          </TrayButton>
          {tray.map(([label, icon]) => (
            <TrayButton key={label} aria-label={label}>{icon}</TrayButton>
          ))}
          <TrayButton $width={38} aria-label="Pen">
            <Line w={17} h={17} sw={1.3}><path d="M5 12c0-2 6-10 7.500-11S15 2 14 3.500 7 12 5 12zM5 12c-1-3-4-1-4 1.500S5 16 7 13c2-2.500 2-6 3.500-6.500s1 3 0 5 2 0 2-1.500 1.500-2 3.500-1.500" /></Line>
          </TrayButton>
          <Clock><span>8:34 AM</span><span>9/4/2024</span></Clock>
          <Notices aria-label="Notifications, 1 new">
            <Svg s={24}>
              <path fill="#fff" d="M0 0h16v12.500H8L4.500 16v-3.500H0z" />
              <path stroke="#1e1e1e" strokeWidth="1.3" d="M3 3.500h10M3 6.500h10M3 9.500h6" />
              <circle cx="15.500" cy="15.500" r="8" fill="#3a3a3a" stroke="#8a8a8a" />
              <Glyph x={15.5} y={19.5} size={11} weight={400}>1</Glyph>
            </Svg>
          </Notices>
        </Tray>
      </Taskbar>
    </Screen>
  );
}
